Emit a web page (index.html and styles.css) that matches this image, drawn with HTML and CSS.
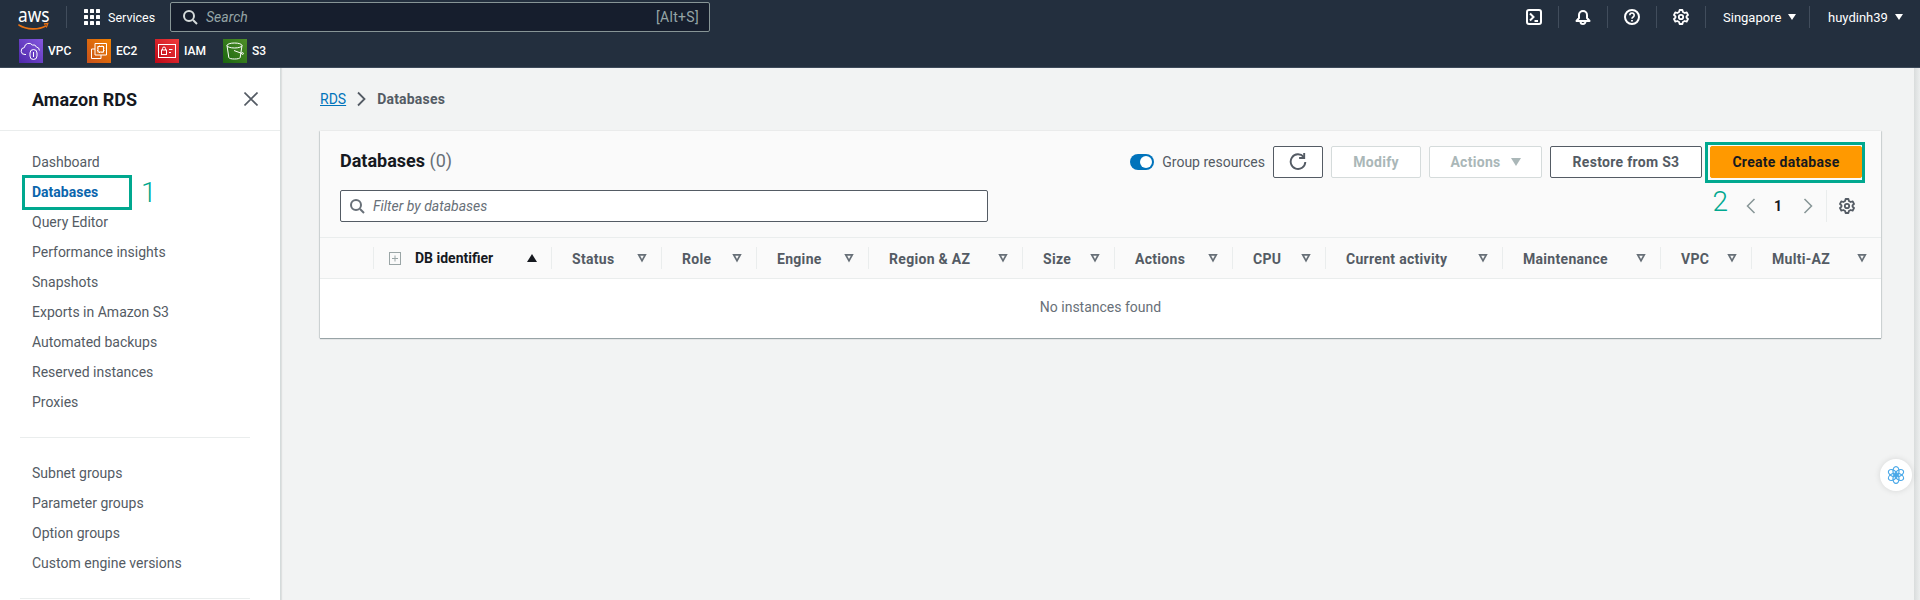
FILE: index.html
```html
<!DOCTYPE html>
<html lang="en">
<head>
<meta charset="utf-8">
<title>Databases | Amazon RDS</title>
<link rel="stylesheet" href="styles.css">
</head>
<body>
<header class="topnav">
  <div class="toprow">
    <svg class="awslogo" viewBox="0 0 37 24" preserveAspectRatio="none"><text x="0" y="15" class="awstext">aws</text><path d="M1 18c9 5 23 5 31 1" fill="none" stroke="#ec7211" stroke-width="1.6" stroke-linecap="round"/><path d="M30 17l4.500-.5-1.700 4" fill="none" stroke="#ec7211" stroke-width="1.300"/></svg>
    <span class="vsep logosep"></span>
    <svg class="grid" viewBox="0 0 16 16" fill="#fff"><rect x="0" y="0" width="4" height="4" rx=".6"/><rect x="6" y="0" width="4" height="4" rx=".6"/><rect x="12" y="0" width="4" height="4" rx=".6"/><rect x="0" y="6" width="4" height="4" rx=".6"/><rect x="6" y="6" width="4" height="4" rx=".6"/><rect x="12" y="6" width="4" height="4" rx=".6"/><rect x="0" y="12" width="4" height="4" rx=".6"/><rect x="6" y="12" width="4" height="4" rx=".6"/><rect x="12" y="12" width="4" height="4" rx=".6"/></svg>
    <span class="services">Services</span>
    <div class="topsearch">
      <svg class="ic16" viewBox="0 0 16 16" fill="none" stroke="#d5dbdb" stroke-width="2"><circle cx="7" cy="7" r="5"/><path d="M11 11l4 4"/></svg>
      <span class="searchph">Search</span>
      <span class="shortcut">[Alt+S]</span>
    </div>
    <div class="topright">
      <span class="tool"><svg class="ic16" viewBox="0 0 16 16" fill="none" stroke="#fff" stroke-width="2"><rect x="1" y="1" width="14" height="14" rx="2"/><path d="M4 4.500L7.500 8 4 11.500M8.500 12H12"/></svg></span>
      <span class="tool"><svg class="ic16" viewBox="0 0 16 16" fill="none" stroke="#fff" stroke-width="2"><path d="M1.500 12h13L12 9V6a4 4 0 0 0-8 0v3z" stroke-linejoin="round"/><path d="M5.500 12.500a2.500 2.500 0 0 0 5 0"/></svg></span>
      <span class="tool"><svg class="ic16" viewBox="0 0 16 16" fill="none" stroke="#fff" stroke-width="2"><circle cx="8" cy="8" r="7"/><path d="M5.800 6.200a2.200 2.200 0 1 1 3.400 1.800c-.8.500-1.200 1-1.200 1.800" stroke-width="1.600"/><path d="M8 11v1.600" stroke-width="1.800"/></svg></span>
      <span class="tool"><svg class="ic16" viewBox="0 0 16 16" fill="none" stroke="#fff" stroke-width="1.800"><path d="M6.600 1h2.800l.5 2 1.800 1 2-.6L15 6l-1.500 1.400v1.200L15 10l-1.300 2.600-2-.6-1.800 1-.5 2H6.600l-.5-2-1.800-1-2 .6L1 10l1.500-1.400V7.400L1 6l1.300-2.600 2 .6 1.800-1z" stroke-linejoin="round"/><circle cx="8" cy="8" r="2.200"/></svg></span>
      <span class="tool textual region"><span class="toptxt">Singapore</span><i class="caret"></i></span>
      <span class="tool textual last"><span class="toptxt">huydinh39</span><i class="caret"></i></span>
    </div>
  </div>
  <div class="favrow">
    <span class="fav"><svg class="favic purple" viewBox="0 0 24 24" fill="none" stroke="#fff" stroke-width="1"><path d="M7 15.500H6a3.500 3.500 0 0 1-.6-7 4.500 4.500 0 0 1 8-2.500 3.200 3.200 0 0 1 4 2 3.500 3.500 0 0 1 3 3.500"/><rect x="11" y="10.500" width="7" height="10" rx="3.500"/><path d="M14.500 13v5"/></svg>VPC</span>
    <span class="fav"><svg class="favic orange" viewBox="0 0 24 24" fill="none" stroke="#fff" stroke-width="1"><path d="M8 10H4.500v9.500h9.500V16"/><path d="M8 4.500h11.500V16H8z"/><rect x="11" y="7.500" width="5.500" height="5.500"/><path d="M10 9h1M10 11.500h1M16.500 9h1M16.500 11.500h1M12.500 6.500v1M15 6.500v1M12.500 13v1M15 13v1"/></svg>EC2</span>
    <span class="fav"><svg class="favic red" viewBox="0 0 24 24" fill="none" stroke="#fff" stroke-width="1"><rect x="3.500" y="5.500" width="17" height="13"/><rect x="6.500" y="11" width="5" height="4.500"/><path d="M7.500 11V9.500a1.500 1.500 0 0 1 3 0V11M14 10.500h3.500M14 13.500h2"/></svg>IAM</span>
    <span class="fav"><svg class="favic green" viewBox="0 0 24 24" fill="none" stroke="#fff" stroke-width="1"><ellipse cx="11.500" cy="6.500" rx="7.500" ry="2.500"/><path d="M4 6.500l1.800 12c.2 1 2.700 1.500 5.700 1.500s5.500-.5 5.700-1.500L19 6.500"/><path d="M11 11.500l8 3"/><circle cx="19.500" cy="14.500" r=".9"/></svg>S3</span>
  </div>
</header>

<div class="shell">
  <aside class="side">
    <div class="sidehead">
      <span class="sidetitle">Amazon RDS</span>
      <svg class="closex" viewBox="0 0 14 14" fill="none" stroke="#545b64" stroke-width="1.600"><path d="M.5.5l13 13M13.500.5L.5 13.500"/></svg>
    </div>
    <nav class="sidenav">
      <a class="navitem">Dashboard</a>
      <a class="navitem active">Databases<span class="mark mark1"></span><span class="num num1">1</span></a>
      <a class="navitem">Query Editor</a>
      <a class="navitem">Performance insights</a>
      <a class="navitem">Snapshots</a>
      <a class="navitem">Exports in Amazon S3</a>
      <a class="navitem">Automated backups</a>
      <a class="navitem">Reserved instances</a>
      <a class="navitem">Proxies</a>
      <hr class="navdiv">
      <a class="navitem">Subnet groups</a>
      <a class="navitem">Parameter groups</a>
      <a class="navitem">Option groups</a>
      <a class="navitem">Custom engine versions</a>
      <hr class="navdiv">
    </nav>
  </aside>

  <main class="main">
    <div class="crumbs"><a class="crumblink">RDS</a>
      <svg class="crumbsep" viewBox="0 0 10 16" fill="none" stroke="#545b64" stroke-width="1.800"><path d="M2 1.500L8.500 8 2 14.500"/></svg>
      <span class="crumbcur">Databases</span></div>

    <section class="card">
      <div class="cardhead">
        <div class="headrow">
          <h2 class="cardtitle">Databases <span class="count">(0)</span></h2>
          <div class="actions">
            <span class="toggle"><i class="knob"></i></span>
            <span class="togglelabel">Group resources</span>
            <button class="btn refresh"><svg class="ic18" viewBox="0 0 16 16" fill="none" stroke="#545b64" stroke-width="1.700"><path d="M13 3.500A6.500 6.500 0 1 0 14.500 8"/><path d="M13.500 0v4.500H9"/></svg></button>
            <button class="btn disabled modify">Modify</button>
            <button class="btn disabled actionsbtn">Actions<i class="caret graycaret"></i></button>
            <button class="btn restore">Restore from S3</button>
            <span class="createwrap"><button class="btn primary">Create database</button></span>
          </div>
        </div>
        <div class="filterrow">
          <div class="filter">
            <svg class="ic16" viewBox="0 0 16 16" fill="none" stroke="#687078" stroke-width="2"><circle cx="7" cy="7" r="5"/><path d="M11 11l4 4"/></svg>
            <span class="filterph">Filter by databases</span>
          </div>
          <div class="pager">
            <span class="num num2">2</span>
            <svg class="chev" viewBox="0 0 10 16" fill="none" stroke="#879596" stroke-width="1.500"><path d="M8.500 1L1.500 8l7 7"/></svg>
            <span class="pagenum">1</span>
            <svg class="chev" viewBox="0 0 10 16" fill="none" stroke="#879596" stroke-width="1.500"><path d="M1.500 1l7 7-7 7"/></svg>
            <span class="pagesep"></span>
            <svg class="ic16" viewBox="0 0 16 16" fill="none" stroke="#545b64" stroke-width="1.800"><path d="M6.600 1h2.800l.5 2 1.800 1 2-.6L15 6l-1.500 1.400v1.200L15 10l-1.300 2.600-2-.6-1.800 1-.5 2H6.600l-.5-2-1.800-1-2 .6L1 10l1.500-1.400V7.400L1 6l1.300-2.600 2 .6 1.800-1z" stroke-linejoin="round"/><circle cx="8" cy="8" r="2.200"/></svg>
          </div>
        </div>
      </div>
      <div class="thead">
        <div class="th c0"></div>
        <div class="th c1"><svg class="expand" viewBox="0 0 12 13" fill="#fafafa" stroke="#9aa5a6"><rect x=".5" y=".5" width="11" height="12"/><path d="M6 3.500v6M3 6.500h6"/></svg><span class="thtext idtext">DB identifier</span><i class="sortup"></i></div>
        <div class="th c2"><span class="thtext">Status</span><i class="sort"></i></div>
        <div class="th c3"><span class="thtext">Role</span><i class="sort"></i></div>
        <div class="th c4"><span class="thtext">Engine</span><i class="sort"></i></div>
        <div class="th c5"><span class="thtext">Region &amp; AZ</span><i class="sort"></i></div>
        <div class="th c6"><span class="thtext">Size</span><i class="sort"></i></div>
        <div class="th c7"><span class="thtext">Actions</span><i class="sort"></i></div>
        <div class="th c8"><span class="thtext">CPU</span><i class="sort"></i></div>
        <div class="th c9"><span class="thtext">Current activity</span><i class="sort"></i></div>
        <div class="th c10"><span class="thtext">Maintenance</span><i class="sort"></i></div>
        <div class="th c11"><span class="thtext">VPC</span><i class="sort"></i></div>
        <div class="th c12"><span class="thtext">Multi-AZ</span><i class="sort"></i></div>
      </div>
      <div class="empty">No instances found</div>
    </section>
  </main>
  <div class="scrolltrack"></div>
</div>

<button class="chatbtn"><svg viewBox="0 0 24 24" fill="none" stroke="#4aa8e8" stroke-width="1.500"><ellipse cx="12" cy="7.500" rx="3.600" ry="5.600"/><ellipse cx="12" cy="7.500" rx="3.600" ry="5.600" transform="rotate(60 12 12)"/><ellipse cx="12" cy="7.500" rx="3.600" ry="5.600" transform="rotate(120 12 12)"/><ellipse cx="12" cy="7.500" rx="3.600" ry="5.600" transform="rotate(180 12 12)"/><ellipse cx="12" cy="7.500" rx="3.600" ry="5.600" transform="rotate(240 12 12)"/><ellipse cx="12" cy="7.500" rx="3.600" ry="5.600" transform="rotate(300 12 12)"/></svg></button>
</body>
</html>
```
FILE: styles.css
```css
*, *::after { box-sizing: border-box; }
html, body { margin: 0; height: 600px; overflow: hidden; }
body { font-family: Roboto, "Noto Sans", sans-serif; font-size: 14px; color: #16191f; background: #f2f3f3; display: flex; flex-direction: column; }

.topnav { height: 68px; background: #232f3e; color: #fff; border-bottom: 1px solid #3d4a5a; flex: none; }
.toprow { height: 34px; display: flex; align-items: center; padding-left: 18px; }
.awslogo { width: 32px; height: 24px; margin-top: 3px; }
.awstext { font-size: 20px; fill: #fff; font-family: "Noto Sans", sans-serif; }
.vsep { width: 1px; height: 22px; background: #414d5c; }
.logosep { margin-left: 16px; }
.grid { width: 16px; height: 16px; margin-left: 17px; }
.services { font-size: 12.500px; margin-left: 8px; width: 62px; }
.topsearch { width: 540px; height: 30px; background: #161e2d; border: 1px solid #879596; border-radius: 2px; display: flex; align-items: center; padding: 0 10px 0 11px; }
.searchph { font-style: italic; font-size: 14px; color: #95a5a6; margin-left: 8px; flex: 1; }
.shortcut { font-size: 14px; color: #95a5a6; letter-spacing: .3px; }
.ic16 { width: 16px; height: 16px; flex: none; display: block; }
.ic18 { width: 18px; height: 18px; flex: none; display: block; }
.topright { margin-left: auto; display: flex; align-items: center; height: 24px; padding-right: 19px; }
.tool { display: flex; align-items: center; height: 22px; padding: 0 16px; border-right: 1px solid #414d5c; }
.tool.region { width: 104px; padding-left: 17px; }
.tool.last { border-right: 0; padding-right: 0; padding-left: 18px; width: 91px; }
.tool.textual { font-size: 13px; }
.toptxt { white-space: nowrap; }
.caret { display: inline-block; width: 0; height: 0; border-left: 4.500px solid transparent; border-right: 4.500px solid transparent; border-top: 6px solid #fff; margin-left: 7px; }

.favrow { height: 33px; display: flex; align-items: center; padding-left: 19px; }
.fav { display: flex; align-items: center; width: 68px; font-size: 12px; font-weight: 500; gap: 5px; }
.favic { width: 24px; height: 24px; flex: none; }
.purple { background: linear-gradient(45deg, #4d27a8, #8558e0); }
.orange { background: linear-gradient(45deg, #c8511b, #f08000); }
.red { background: linear-gradient(45deg, #bd0816, #f03c3c); }
.green { background: linear-gradient(45deg, #1b660f, #4f8f28); }

.shell { flex: 1; display: flex; min-height: 0; }
.side { width: 281px; flex: none; background: #fff; border-right: 1px solid #d5dbdb; box-shadow: 1px 0 1px rgba(0,0,0,.08); overflow: hidden; }
.sidehead { height: 63px; padding: 0 22px 0 32px; border-bottom: 1px solid #eaeded; display: flex; align-items: center; justify-content: space-between; }
.sidetitle { font-size: 18px; font-weight: 700; }
.closex { width: 14px; height: 14px; }
.sidenav { padding: 16px 30px 0 20px; }
.navitem { display: flex; align-items: center; height: 30px; padding-left: 12px; color: #545b64; position: relative; white-space: nowrap; }
.navitem.active { color: #0b66ad; font-weight: 700; }
.navdiv { border: 0; border-top: 1px solid #eaeded; margin: 20px 0 20px; }
.mark { position: absolute; border: 3px solid #00a88f; }
.mark1 { left: 2px; top: -2px; width: 110px; height: 35px; }
.num { color: #00a88f; font-size: 28px; font-weight: 300; line-height: 1; }
.num1 { position: absolute; left: 121px; top: 2px; }

.main { flex: 1; padding: 0 33px 0 39px; min-width: 0; }
.crumbs { height: 63px; display: flex; align-items: center; font-size: 14px; gap: 10px; padding-bottom: 1px; }
.crumblink { color: #0073bb; text-decoration: underline; }
.crumbsep { width: 10px; height: 16px; }
.crumbcur { color: #545b64; font-weight: 700; letter-spacing: .2px; margin-left: 1px; }
.scrolltrack { width: 6px; flex: none; background: linear-gradient(to right, #d9dcdc, #eceeee); }

.card { background: #fff; box-shadow: 0 1px 1px rgba(0,28,36,.35), 1px 0 1px rgba(0,28,36,.1), -1px 0 1px rgba(0,28,36,.1); }
.cardhead { height: 107px; background: #fafafa; border-bottom: 1px solid #eaeded; padding: 15px 19px 0 20px; }
.headrow { display: flex; justify-content: space-between; align-items: center; height: 32px; }
.cardtitle { margin: 0 0 4px; font-size: 18px; font-weight: 700; }
.count { font-weight: 400; color: #687078; }
.actions { display: flex; align-items: center; gap: 8px; }
.toggle { width: 24px; height: 16px; border-radius: 8px; background: #0073bb; position: relative; display: block; }
.knob { position: absolute; right: 2px; top: 2px; width: 12px; height: 12px; border-radius: 50%; background: #fff; }
.togglelabel { font-size: 14px; color: #545b64; }
.btn { font-family: inherit; font-size: 14px; font-weight: 700; letter-spacing: .3px; height: 32px; background: #fff; border: 1px solid #545b64; border-radius: 2px; color: #545b64; padding: 0; display: flex; align-items: center; justify-content: center; }
.refresh { width: 50px; }
.modify { width: 90px; }
.actionsbtn { width: 113px; }
.restore { width: 152px; }
.disabled { border-color: #d5dbdb; color: #aab7b8; }
.graycaret { border-top-color: #aab7b8; border-left-width: 5.500px; border-right-width: 5.500px; border-top-width: 8px; margin-left: 10px; }
.primary { width: 152px; background: #ff9900; border-color: #ff9900; color: #16191f; }
.createwrap { position: relative; display: block; }
.createwrap::after { content: ""; position: absolute; left: -5px; top: -4px; width: 160px; height: 41px; border: 3px solid #00a88f; }
.filterrow { display: flex; justify-content: space-between; margin-top: 12px; }
.filter { width: 648px; height: 32px; background: #fff; border: 1px solid #545b64; border-radius: 2px; display: flex; align-items: center; padding-left: 8px; gap: 8px; }
.filterph { font-style: italic; font-size: 14px; color: #687078; }
.pager { display: flex; align-items: center; height: 32px; padding-right: 7px; }
.num2 { margin-right: 17px; position: relative; top: -4px; }
.chev { width: 12px; height: 16px; }
.pagenum { font-weight: 700; font-size: 14px; margin: 0 20px 0 17px; }
.pagesep { width: 1px; height: 32px; background: #eaeded; margin: 0 12px; }

.thead { display: flex; height: 41px; background: #fafafa; border-bottom: 1px solid #eaeded; align-items: center; }
.th { height: 22px; display: flex; align-items: center; border-left: 1px solid #eaeded; padding-left: 20px; padding-right: 14px; flex: none; font-weight: 700; color: #545b64; font-size: 14px; }
.thtext { flex: 1; white-space: nowrap; padding-top: 2px; letter-spacing: .3px; }
.idtext { color: #16191f; margin-left: 14px; padding-top: 0; letter-spacing: 0; }
.c0 { width: 53px; border-left: 0; padding: 0; }
.c1 { width: 178px; padding-left: 15px; }
.c2 { width: 110px; } .c3 { width: 95px; } .c4 { width: 112px; } .c5 { width: 154px; }
.c6 { width: 92px; } .c7 { width: 118px; } .c8 { width: 93px; } .c9 { width: 177px; }
.c10 { width: 158px; } .c11 { width: 91px; } .c12 { flex: 1; }
.expand { width: 12px; height: 13px; flex: none; }
.sort { width: 10px; height: 9px; background: #687078; flex: none; clip-path: polygon(evenodd, 0 0, 100% 0, 50% 100%, 0 0, 32% 25%, 68% 25%, 50% 62%, 32% 25%); }
.sortup { width: 0; height: 0; border-left: 5.500px solid transparent; border-right: 5.500px solid transparent; border-bottom: 8px solid #16191f; flex: none; }
.empty { height: 59px; display: flex; align-items: center; justify-content: center; color: #687078; font-size: 14px; background: #fff; padding-bottom: 3px; }

.chatbtn { position: fixed; right: 8px; top: 459px; width: 32px; height: 32px; padding: 6px; border: 0; border-radius: 50%; background: #fff; box-shadow: 0 0 6px rgba(0,0,0,.12); }
.chatbtn svg { display: block; width: 20px; height: 20px; }
```
